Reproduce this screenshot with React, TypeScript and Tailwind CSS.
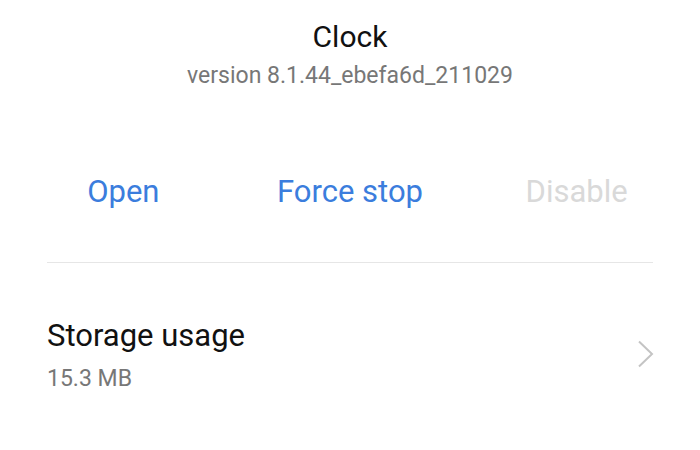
export default function App() {
  const font = { fontFamily: "Roboto, 'Noto Sans', sans-serif" };
  return (
    <div className="w-[700px] h-[450px] bg-white overflow-hidden" style={font}>
      <div className="pt-[19px] flex flex-col items-center">
        <div className="text-[30px] leading-[36px] text-[#111111]">Clock</div>
        <div className="mt-[7px] text-[23px] leading-[28px] text-[#777777]">version 8.1.44_ebefa6d_211029</div>
      </div>
      <div className="mt-[84px] px-[10px] grid grid-cols-3 text-[31px] leading-[36px]">
        <div className="text-center text-[#3b7ddd]">Open</div>
        <div className="text-center text-[#3b7ddd]">Force stop</div>
        <div className="text-center text-[#d9d9d9]">Disable</div>
      </div>
      <div className="mt-[52px] mx-[47px] h-px bg-[#e6e6e6]" />
      <div className="mt-[55px] pl-[47px] pr-[45px] flex items-center justify-between">
        <div className="flex flex-col">
          <div className="text-[31px] leading-[36px] text-[#111111]">Storage usage</div>
          <div className="mt-[11px] text-[23px] leading-[28px] text-[#777777]">15.3 MB</div>
        </div>
        <svg width="18" height="28" viewBox="0 0 18 28" className="-mt-[3px]">
          <path d="M2 1.5 L15 14 L2 26.5" fill="none" stroke="#c4c4c4" strokeWidth="2" />
        </svg>
      </div>
    </div>
  );
}
